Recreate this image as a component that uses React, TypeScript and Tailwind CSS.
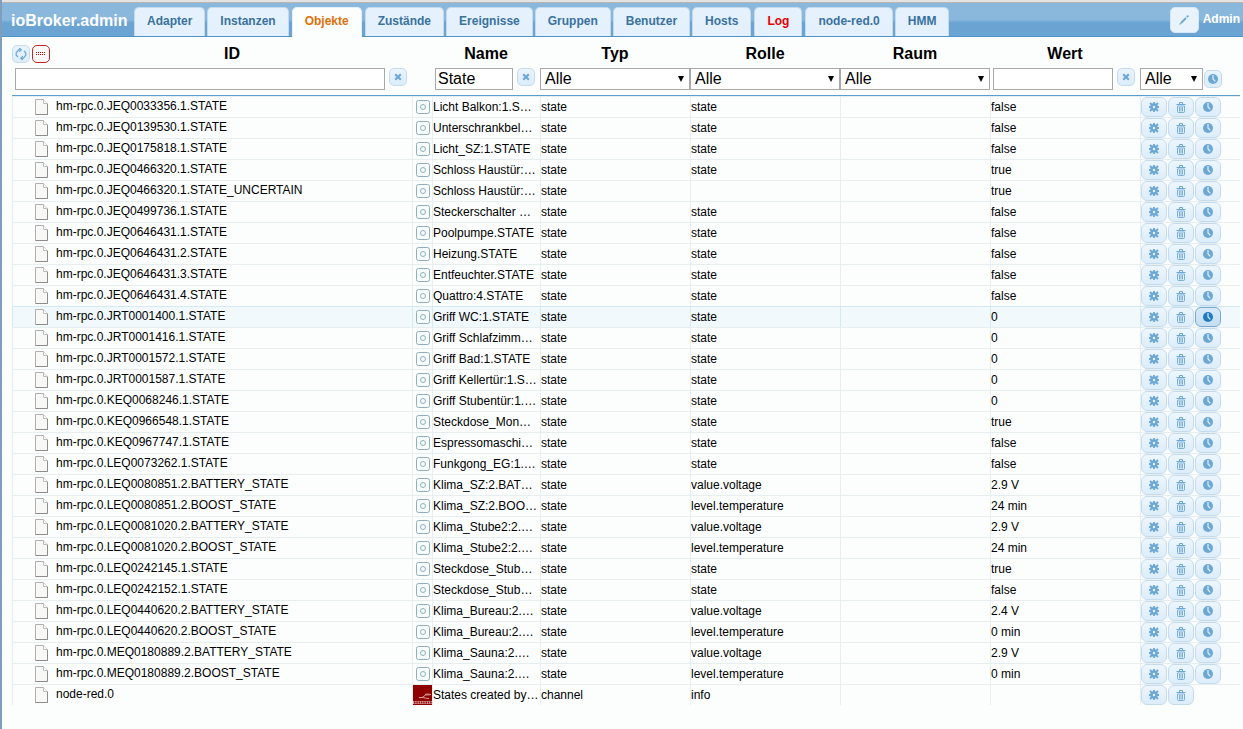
import React from "react";

const tabs = [
  "Adapter",
  "Instanzen",
  "Objekte",
  "Zustände",
  "Ereignisse",
  "Gruppen",
  "Benutzer",
  "Hosts",
  "Log",
  "node-red.0",
  "HMM",
];

type Row = [id: string, name: string, type: string, role: string, value: string];

const rows: Row[] = [
  ["hm-rpc.0.JEQ0033356.1.STATE", "Licht Balkon:1.S…", "state", "state", "false"],
  ["hm-rpc.0.JEQ0139530.1.STATE", "Unterschrankbel…", "state", "state", "false"],
  ["hm-rpc.0.JEQ0175818.1.STATE", "Licht_SZ:1.STATE", "state", "state", "false"],
  ["hm-rpc.0.JEQ0466320.1.STATE", "Schloss Haustür:…", "state", "state", "true"],
  ["hm-rpc.0.JEQ0466320.1.STATE_UNCERTAIN", "Schloss Haustür:…", "state", "", "true"],
  ["hm-rpc.0.JEQ0499736.1.STATE", "Steckerschalter …", "state", "state", "false"],
  ["hm-rpc.0.JEQ0646431.1.STATE", "Poolpumpe.STATE", "state", "state", "false"],
  ["hm-rpc.0.JEQ0646431.2.STATE", "Heizung.STATE", "state", "state", "false"],
  ["hm-rpc.0.JEQ0646431.3.STATE", "Entfeuchter.STATE", "state", "state", "false"],
  ["hm-rpc.0.JEQ0646431.4.STATE", "Quattro:4.STATE", "state", "state", "false"],
  ["hm-rpc.0.JRT0001400.1.STATE", "Griff WC:1.STATE", "state", "state", "0"],
  ["hm-rpc.0.JRT0001416.1.STATE", "Griff Schlafzimm…", "state", "state", "0"],
  ["hm-rpc.0.JRT0001572.1.STATE", "Griff Bad:1.STATE", "state", "state", "0"],
  ["hm-rpc.0.JRT0001587.1.STATE", "Griff Kellertür:1.S…", "state", "state", "0"],
  ["hm-rpc.0.KEQ0068246.1.STATE", "Griff Stubentür:1.…", "state", "state", "0"],
  ["hm-rpc.0.KEQ0966548.1.STATE", "Steckdose_Mon…", "state", "state", "true"],
  ["hm-rpc.0.KEQ0967747.1.STATE", "Espressomaschi…", "state", "state", "false"],
  ["hm-rpc.0.LEQ0073262.1.STATE", "Funkgong_EG:1.…", "state", "state", "false"],
  ["hm-rpc.0.LEQ0080851.2.BATTERY_STATE", "Klima_SZ:2.BAT…", "state", "value.voltage", "2.9 V"],
  ["hm-rpc.0.LEQ0080851.2.BOOST_STATE", "Klima_SZ:2.BOO…", "state", "level.temperature", "24 min"],
  ["hm-rpc.0.LEQ0081020.2.BATTERY_STATE", "Klima_Stube2:2.…", "state", "value.voltage", "2.9 V"],
  ["hm-rpc.0.LEQ0081020.2.BOOST_STATE", "Klima_Stube2:2.…", "state", "level.temperature", "24 min"],
  ["hm-rpc.0.LEQ0242145.1.STATE", "Steckdose_Stub…", "state", "state", "true"],
  ["hm-rpc.0.LEQ0242152.1.STATE", "Steckdose_Stub…", "state", "state", "false"],
  ["hm-rpc.0.LEQ0440620.2.BATTERY_STATE", "Klima_Bureau:2.…", "state", "value.voltage", "2.4 V"],
  ["hm-rpc.0.LEQ0440620.2.BOOST_STATE", "Klima_Bureau:2.…", "state", "level.temperature", "0 min"],
  ["hm-rpc.0.MEQ0180889.2.BATTERY_STATE", "Klima_Sauna:2.…", "state", "value.voltage", "2.9 V"],
  ["hm-rpc.0.MEQ0180889.2.BOOST_STATE", "Klima_Sauna:2.…", "state", "level.temperature", "0 min"],
  ["node-red.0", "States created by…", "channel", "info", ""],
];

const selectedRow = 10;

function FileIcon() {
  return (
    <svg className="block h-4 w-[13px] shrink-0" viewBox="0 0 13 16" aria-hidden="true">
      <path d="M0.5 0.5H8.5L12.5 4.5V15.5H0.5Z" fill="#f8f8f6" stroke="#b0b0b0" />
      <path d="M8.5 0.5V4.5H12.5" fill="#fff" stroke="#bdbdbd" />
      <path d="M0.5 15.5H12.5V5" fill="none" stroke="#8c8c8c" />
    </svg>
  );
}

function StateIcon() {
  return (
    <svg className="block h-[14px] w-[14px]" viewBox="0 0 14 14" aria-hidden="true">
      <rect x="0.5" y="0.5" width="13" height="13" rx="2" fill="#f7fbfc" stroke="#8fb0ba" />
      <circle cx="7" cy="7" r="2.5" fill="none" stroke="#8fb0ba" />
    </svg>
  );
}

function NodeRedIcon() {
  return (
    <svg className="block h-5 w-5 shrink-0" viewBox="0 0 20 20" aria-hidden="true">
      <rect width="20" height="20" fill="#8f0000" />
      <path d="M6 12.5H9C11 12.5 11 9.5 14 9.5H18M9 12.5C12 12.5 12 13.5 16 13.5" fill="none" stroke="#d9a0a0" />
      <rect x="12" y="8.5" width="5" height="2" rx="1" fill="#c98080" />
      <rect x="0" y="16" width="20" height="3" fill="#d9a8a8" />
      <path d="M1 17.5H19" stroke="#8f0000" strokeWidth="2" strokeDasharray="1.5 0.8" />
    </svg>
  );
}

function GearIcon() {
  return (
    <svg className="block h-[10px] w-[10px]" viewBox="0 0 10 10" aria-hidden="true">
      <g stroke="currentColor" strokeWidth="1.8">
        <path d="M5 0V10M0 5H10M1 1L9 9M9 1L1 9" />
      </g>
      <circle cx="5" cy="5" r="3.7" fill="currentColor" />
      <circle cx="5" cy="5" r="1.2" fill="#e6f3fd" />
    </svg>
  );
}

function TrashIcon() {
  return (
    <svg className="block h-[11px] w-[10px]" viewBox="0 0 10 11" aria-hidden="true">
      <path d="M0.5 2.5H9.5M3.5 2V0.5H6.5V2" fill="none" stroke="currentColor" />
      <path d="M1.5 4H8.5V9.5Q8.5 10.500 7.5 10.500H2.5Q1.5 10.500 1.5 9.5ZM3.5 5V9.5M5 5V9.5M6.5 5V9.5" fill="none" stroke="currentColor" strokeWidth="0.9" />
    </svg>
  );
}

function ClockIcon() {
  return (
    <svg className="block h-[10px] w-[10px]" viewBox="0 0 10 10" aria-hidden="true">
      <circle cx="5" cy="5" r="5" fill="currentColor" />
      <path d="M5 1V5L7.3 7.3" fill="none" stroke="#eaf5fd" strokeWidth="1.1" />
    </svg>
  );
}

function CloseIcon() {
  return (
    <svg className="block h-2 w-2" viewBox="0 0 8 8" aria-hidden="true">
      <path d="M1.2 1.2L6.8 6.8M6.8 1.2L1.2 6.8" stroke="currentColor" strokeWidth="2.2" />
    </svg>
  );
}

function RefreshIcon() {
  return (
    <svg className="block h-3 w-3" viewBox="0 0 10 10" aria-hidden="true">
      <path d="M4.5 1.5H3L1 4V6L2.5 7.5M3.5 0L5.2 1.5L3.5 3.2M5.5 8.5H7L9 6V4L7.5 2.5M6.5 10L4.8 8.5L6.5 6.8" fill="none" stroke="currentColor" />
    </svg>
  );
}

function DotsIcon() {
  return (
    <svg className="block h-1 w-[10px]" viewBox="0 0 10 4" aria-hidden="true">
      <path d="M0 0.5H10M0 2.5H10" stroke="currentColor" strokeDasharray="1 1" />
    </svg>
  );
}

function PencilIcon() {
  return (
    <svg className="block h-[10px] w-[10px]" viewBox="0 0 10 10" aria-hidden="true">
      <path d="M2 8L7 3" stroke="currentColor" strokeWidth="1.8" />
      <path d="M7.8 2.2L9.3 0.7" stroke="currentColor" strokeWidth="1.8" />
      <path d="M0.3 9.7L1 7.5L2.5 9Z" fill="currentColor" />
    </svg>
  );
}

function SmallButton({ label, children }: { label: string; children: React.ReactNode }) {
  return (
    <button
      aria-label={label}
      className="flex h-[18px] w-[18px] shrink-0 items-center justify-center rounded-[5px] border border-[#c5dbec] bg-linear-to-b from-[#e9f4fd] to-[#dcedfb] text-[#6da8d5]"
    >
      {children}
    </button>
  );
}

function RowButton({ label, active, children }: { label: string; active?: boolean; children: React.ReactNode }) {
  return (
    <button
      aria-label={label}
      className={`flex h-5 w-[26px] items-center justify-center rounded-md border bg-linear-to-b ${
        active
          ? "border-[#79a9cf] from-[#d8eafa] to-[#c5def3] text-[#217bc0]"
          : "border-[#c5dbec] from-[#edf6fe] to-[#dcedfb] text-[#6da8d5]"
      }`}
    >
      {children}
    </button>
  );
}

function Filter({ label }: { label: string }) {
  return (
    <div className="relative w-full">
      <select aria-label={label} className="block h-[22px] w-full appearance-none border border-[#a9a9a9] bg-white pl-1 text-base leading-5">
        <option>Alle</option>
      </select>
      <span className="pointer-events-none absolute top-2 right-[6px] border-x-[3px] border-t-[6px] border-x-transparent border-t-black" />
    </div>
  );
}

const inputStyle = "block h-[22px] min-w-0 flex-1 border border-[#a9a9a9] bg-white px-[2px] text-base leading-5";
const line = "border-b border-[#5a9fcf] p-0 align-top";
const head = "p-0 pt-[2px]";

export default function App() {
  return (
    <div className="min-h-screen border-l-2 border-[#7f9dbd] bg-[#fcfefe] font-['Liberation_Sans',Arial,sans-serif] text-xs text-black">
      <div className="h-[3px] border-b border-[#b9b5b3] bg-[#e3e3e3]" />
      <header className="flex h-[34px] border-b border-[#4f97cb] bg-linear-to-b from-[#8ab8dc] from-50% to-[#6ba4d3] to-60%">
        <h1 className="w-[132px] shrink-0 pt-[6px] pl-[9px] text-base leading-6 font-bold text-white">ioBroker.admin</h1>
        <nav className="flex gap-[2px] pt-1">
          {tabs.map((tab) => (
            <a
              key={tab}
              href={`#${tab}`}
              className={`block rounded-t-[5px] border border-b-0 px-3 text-xs leading-[26px] font-bold ${
                tab === "Objekte"
                  ? "mx-px h-[30px] border-[#e5f1fa] bg-[#fcfefe] text-[#e17009]"
                  : tab === "Log"
                    ? "mx-px border-[#c5dbec] bg-linear-to-b from-[#e5f2fd] to-[#e4f0fc] text-[#e80000]"
                    : "border-[#c5dbec] bg-linear-to-b from-[#e5f2fd] to-[#e4f0fc] text-[#39719f]"
              }`}
            >
              {tab}
            </a>
          ))}
        </nav>
        <div className="ml-auto flex gap-1 pt-1 pr-[3px]">
          <button
            aria-label="Bearbeiten"
            className="flex h-[26px] w-[29px] items-center justify-center rounded-[5px] border border-[#d5e6f4] bg-[#e8f3fc] text-[#6da8d5]"
          >
            <PencilIcon />
          </button>
          <span className="text-xs leading-6 font-bold text-white">Admin</span>
        </div>
      </header>

      <main className="pr-[3px] pl-[10px]">
        <table className="w-full table-fixed border-separate border-spacing-0">
          <colgroup>
            <col />
            <col className="w-5" />
            <col className="w-[108px]" />
            <col className="w-[150px]" />
            <col className="w-[150px]" />
            <col className="w-[150px]" />
            <col className="w-[150px]" />
            <col className="w-[100px]" />
          </colgroup>
          <thead>
            <tr className="h-[31px] text-base">
              <th className={head}>
                <div className="flex items-center gap-[2px]">
                  <SmallButton label="Aktualisieren"><RefreshIcon /></SmallButton>
                  <button aria-label="Liste" className="flex h-[18px] w-[18px] items-center justify-center rounded-[5px] border border-[#c4242a] bg-[#fdf8f8] text-[#c00000]">
                    <DotsIcon />
                  </button>
                  <span className="flex-1">ID</span>
                </div>
              </th>
              <th className={head} />
              <th className={head}>Name</th>
              <th className={head}>Typ</th>
              <th className={head}>Rolle</th>
              <th className={head}>Raum</th>
              <th className={head}>Wert</th>
              <th className={head} />
            </tr>
            <tr className="h-7">
              <td className={line}>
                <div className="flex gap-1 pr-[5px] pl-[3px]">
                  <input aria-label="ID" className={inputStyle} />
                  <SmallButton label="ID löschen"><CloseIcon /></SmallButton>
                </div>
              </td>
              <td className={line} />
              <td className={line}>
                <div className="flex gap-1 pr-[5px] pl-[3px]">
                  <input aria-label="Name" defaultValue="State" className={inputStyle} />
                  <SmallButton label="Name löschen"><CloseIcon /></SmallButton>
                </div>
              </td>
              <td className={line}><Filter label="Typ" /></td>
              <td className={line}><Filter label="Rolle" /></td>
              <td className={line}><Filter label="Raum" /></td>
              <td className={line}>
                <div className="flex gap-1 pr-[5px] pl-[3px]">
                  <input aria-label="Wert" className={inputStyle} />
                  <SmallButton label="Wert löschen"><CloseIcon /></SmallButton>
                </div>
              </td>
              <td className={line}>
                <div className="flex items-center gap-px">
                  <div className="w-[63px]"><Filter label="Historie" /></div>
                  <SmallButton label="Historie"><ClockIcon /></SmallButton>
                </div>
              </td>
            </tr>
          </thead>
          <tbody>
            {rows.map(([id, name, type, role, value], i) => {
              const channel = type === "channel";
              const cell = `h-[21px] overflow-hidden whitespace-nowrap border-t border-l p-0 leading-5 ${
                i === selectedRow ? "border-[#d5e9f3] bg-[#f1f9fd]" : "border-[#e6eef0]"
              }`;
              return (
                <tr key={id}>
                  <td className={cell}>
                    <div className="flex h-5 items-center gap-2 pl-[22px]">
                      <FileIcon />
                      <span className="pb-[2px]">{id}</span>
                    </div>
                  </td>
                  <td className={cell}>
                    <div className="flex h-5 items-center justify-center">{channel ? <NodeRedIcon /> : <StateIcon />}</div>
                  </td>
                  <td className={cell}>{name}</td>
                  <td className={cell}>{type}</td>
                  <td className={cell}>{role}</td>
                  <td className={cell} />
                  <td className={cell}>{value}</td>
                  <td className={cell}>
                    <div className="flex gap-px">
                      <RowButton label="Bearbeiten"><GearIcon /></RowButton>
                      <RowButton label="Löschen"><TrashIcon /></RowButton>
                      {!channel && (
                        <RowButton label="Historie" active={i === selectedRow}><ClockIcon /></RowButton>
                      )}
                    </div>
                  </td>
                </tr>
              );
            })}
          </tbody>
        </table>
      </main>
    </div>
  );
}
